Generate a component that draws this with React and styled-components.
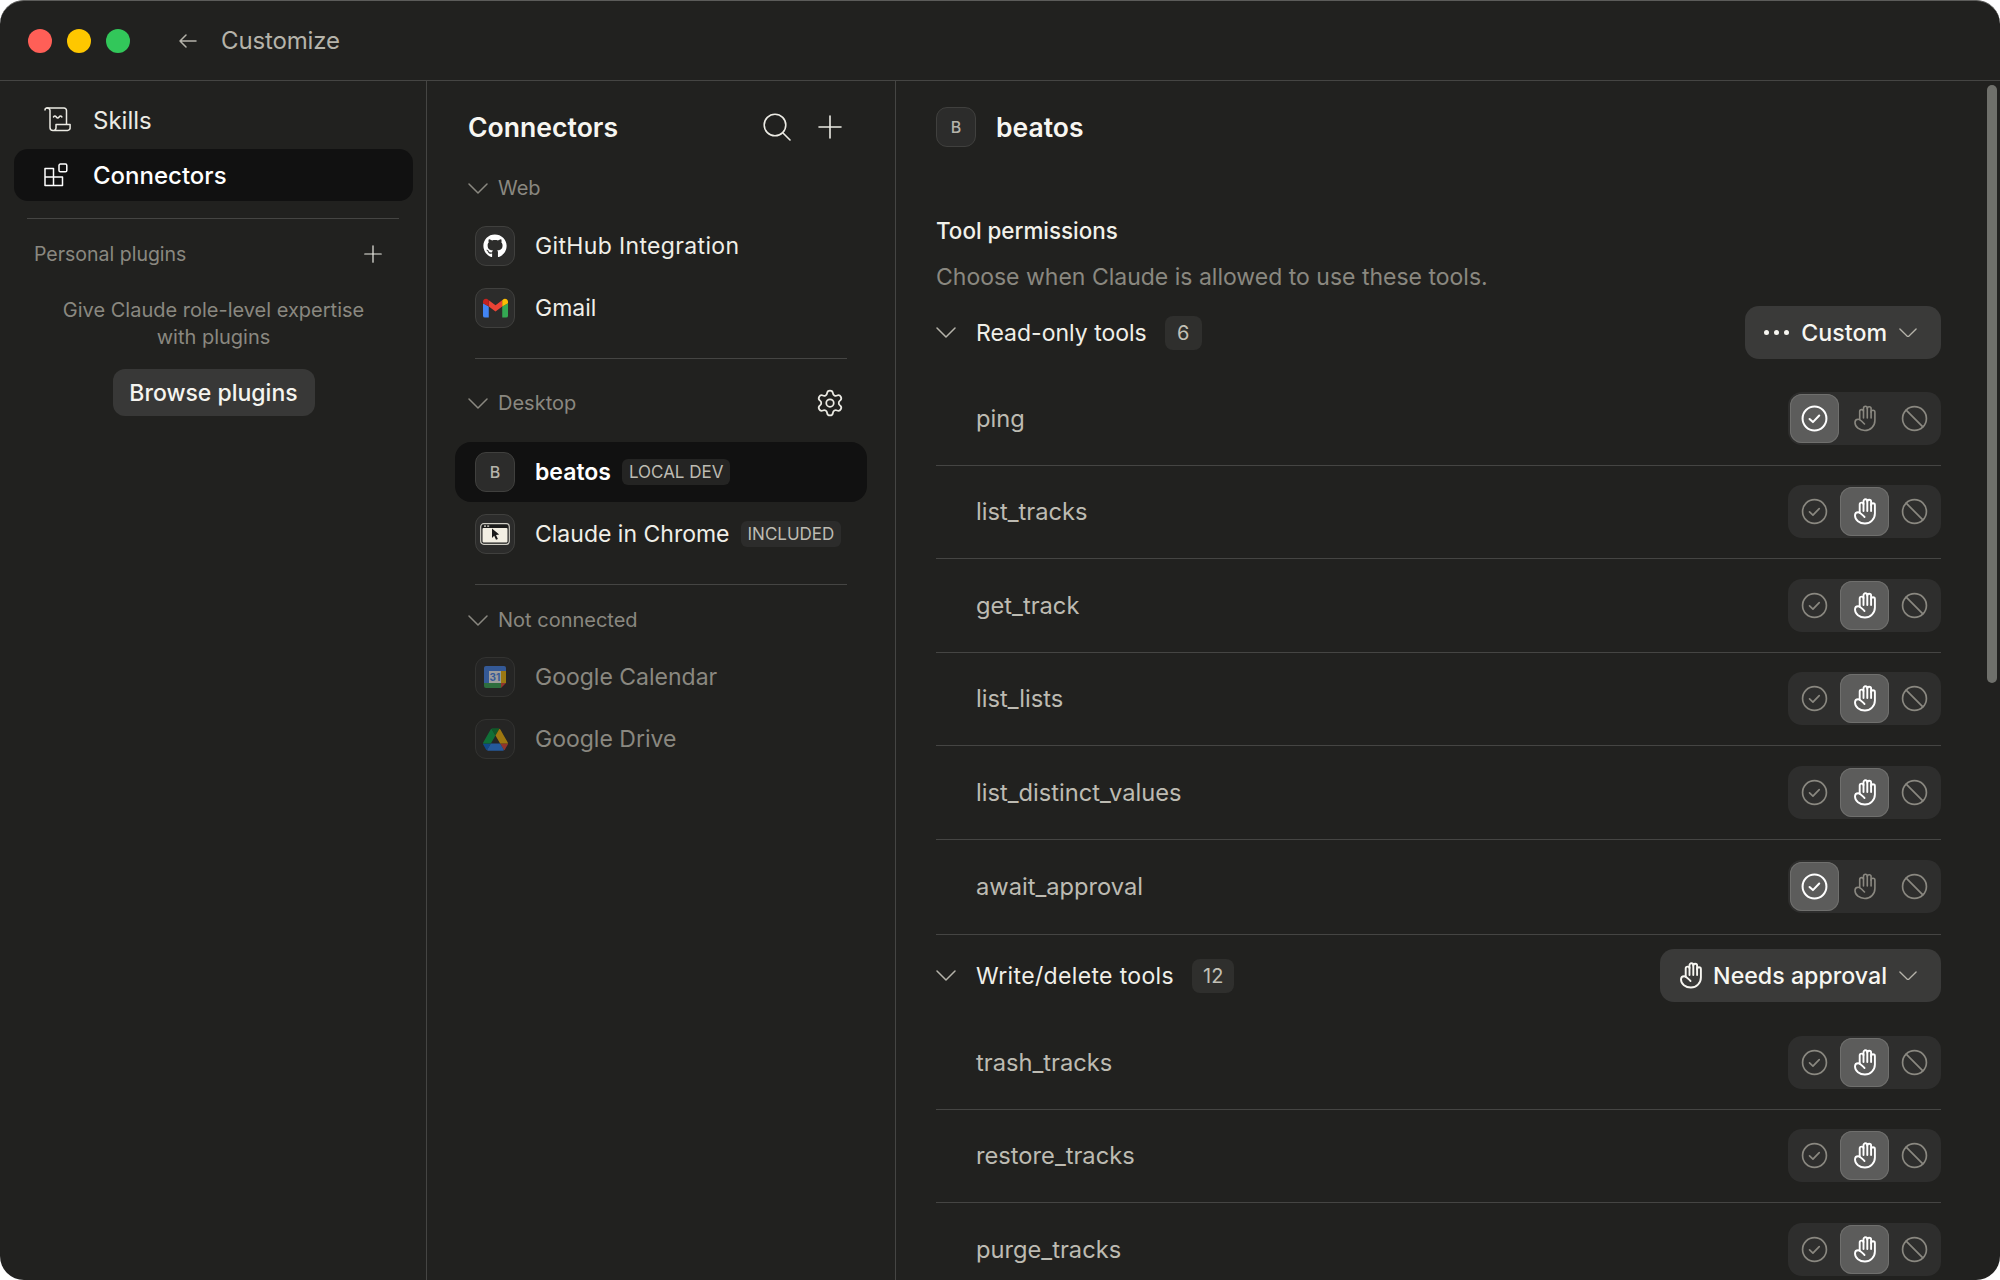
import React from 'react';
import styled, { createGlobalStyle } from 'styled-components';
import { FaGithub } from 'react-icons/fa';
import { Settings } from 'lucide-react';

const READ_ONLY = [
  { name: 'ping', mode: 'allow' },
  { name: 'list_tracks', mode: 'ask' },
  { name: 'get_track', mode: 'ask' },
  { name: 'list_lists', mode: 'ask' },
  { name: 'list_distinct_values', mode: 'ask' },
  { name: 'await_approval', mode: 'allow', tall: true }
];

const WRITE_TOOLS = [
  { name: 'trash_tracks', mode: 'ask' },
  { name: 'restore_tracks', mode: 'ask' },
  { name: 'purge_tracks', mode: 'ask' }
];

const Line = ({ size = 24, w = 1.6, box = '0 0 24 24', children }) => (
  <svg width={size} height={size} viewBox={box} fill="none" stroke="currentColor" strokeWidth={w} strokeLinecap="round" strokeLinejoin="round">
    {children}
  </svg>
);

const Chevron = ({ width = 20 }) => (
  <svg width={width} height={width * 0.55} viewBox="0 0 20 11" fill="none" stroke="currentColor" strokeWidth="1.5" strokeLinecap="round" strokeLinejoin="round">
    <path d="M1 1l9 9 9-9" />
  </svg>
);

const PlusIcon = ({ size = 24 }) => (
  <Line size={size} w={1.6} box="0 0 24 24"><path d="M12 1v22M1 12h22" /></Line>
);

const CheckIcon = ({ w }) => (
  <Line size={27} w={w}><circle cx="12" cy="12" r="10.6" /><path d="M7.6 12.4l3 2.8 5.6-5.8" /></Line>
);

const BanIcon = ({ w }) => (
  <Line size={27} w={w}><circle cx="12" cy="12" r="10.6" /><path d="M4.6 4.6l14.8 14.8" /></Line>
);

const HandIcon = ({ w = 1.9 }) => (
  <svg width="24" height="27" viewBox="0 0 23 27" fill="none" stroke="currentColor" strokeWidth={w} strokeLinecap="round" strokeLinejoin="round">
    <path d="M6.200 14.500V6.500a1.900 1.900 0 0 1 3.800 0V13" />
    <path d="M10 6V3.200a1.900 1.900 0 0 1 3.800 0V13" />
    <path d="M13.800 3.600a1.900 1.900 0 0 1 3.800 0V13" />
    <path d="M17.600 7.200a1.900 1.900 0 0 1 3.800 0v8.300a10 10 0 0 1-10 10c-5.400 0-9.900-3.500-9.900-8 0-2.200 1.500-3.300 3.100-3.300 2 0 3.400 1.800 6.400 4.800" />
  </svg>
);

const ScrollIcon = () => (
  <svg width="28" height="26" viewBox="0 0 28 26" fill="none" stroke="currentColor" strokeWidth="1.5" strokeLinecap="round" strokeLinejoin="round">
    <path d="M1 3a2 2 0 0 1 2-2h17a2.5 2.5 0 0 1 2.5 2.5V17" />
    <path d="M3 1a2.6 2.6 0 0 1 3 2.6v16.900a3 3 0 0 0 3 3h14.500a2.600 2.600 0 0 0 2.600-3v-3H12v3.200a2.800 2.800 0 0 1-3 2.800" />
    <path d="M9.500 10q1.400-2 2.800 0t2.800 0 2.800 0" />
  </svg>
);

const ConnectorsIcon = () => (
  <svg width="24" height="24" viewBox="0 0 24 24" fill="none" stroke="currentColor" strokeWidth="1.5" strokeLinejoin="round">
    <path d="M1 5.500h8.500v17H1zM1 14h17.500v8.500H9.500" />
    <rect x="15" y="1" width="7.800" height="7.800" rx="1.400" />
  </svg>
);

const SearchIcon = () => (
  <svg width="28" height="28" viewBox="0 0 28 28" fill="none" stroke="currentColor" strokeWidth="1.6" strokeLinecap="round">
    <circle cx="12" cy="12" r="10.800" />
    <path d="M20 20l7 7" />
  </svg>
);

const BackIcon = () => (
  <svg width="18" height="14" viewBox="0 0 18 14" fill="none" stroke="currentColor" strokeWidth="1.5" strokeLinecap="round" strokeLinejoin="round">
    <path d="M17 7H1M7 1L1 7l6 6" />
  </svg>
);

const GmailLogo = () => (
  <svg width="25" height="20" viewBox="0 0 26 20">
    <path d="M0 5v13a2 2 0 0 0 2 2h4V8.500z" fill="#4285f4" />
    <path d="M20 8.500V20h4a2 2 0 0 0 2-2V5z" fill="#34a853" />
    <path d="M6 8.500l7 5.200 7-5.200V2l-7 5.200L6 2z" fill="#ea4335" />
    <path d="M0 5V3.600C0 .8 3.400-.7 5.400 1.400L6 2v6.500z" fill="#c5221f" />
    <path d="M26 5V3.600c0-2.800-3.400-4.300-5.400-2.200L20 2v6.500z" fill="#fbbc04" />
  </svg>
);

const CalendarLogo = () => (
  <svg width="22" height="22" viewBox="0 0 22 22">
    <path d="M2 0h18a2 2 0 0 1 2 2v3H0V2a2 2 0 0 1 2-2z" fill="#4285f4" />
    <path d="M0 5h5v12H0z" fill="#4285f4" />
    <path d="M17 5h5v12h-5z" fill="#fbbc04" />
    <path d="M0 17h17v5H2a2 2 0 0 1-2-2z" fill="#34a853" />
    <path d="M17 17h5l-5 5z" fill="#ea4335" />
    <rect x="5" y="5" width="12" height="12" fill="#fff" />
    <text x="11" y="15" textAnchor="middle" fontSize="10" fontWeight="700" fontFamily="Inter, sans-serif" fill="#4285f4">31</text>
  </svg>
);

const DriveLogo = () => (
  <svg width="25" height="23" viewBox="0 0 87.300 78">
    <path d="m6.600 66.850 3.850 6.650c.8 1.400 1.950 2.500 3.300 3.300l13.750-23.800h-27.500c0 1.550.4 3.100 1.200 4.500z" fill="#0066da" />
    <path d="m43.650 25-13.750-23.800c-1.350.8-2.500 1.900-3.300 3.300l-25.400 44a9.060 9.060 0 0 0 -1.200 4.500h27.500z" fill="#00ac47" />
    <path d="m73.550 76.800c1.350-.8 2.500-1.900 3.300-3.300l1.600-2.750 7.650-13.250c.8-1.400 1.200-2.950 1.200-4.500h-27.502l5.852 11.500z" fill="#ea4335" />
    <path d="m43.650 25 13.750-23.800c-1.350-.8-2.900-1.200-4.500-1.200h-18.500c-1.600 0-3.150.45-4.500 1.200z" fill="#00832d" />
    <path d="m59.800 53h-32.300l-13.750 23.800c1.350.8 2.900 1.200 4.500 1.200h50.800c1.600 0 3.150-.45 4.500-1.200z" fill="#2684fc" />
    <path d="m73.400 26.500-12.700-22c-.8-1.400-1.950-2.500-3.300-3.300l-13.750 23.800 16.150 28h27.450c0-1.550-.4-3.100-1.200-4.500z" fill="#ffba00" />
  </svg>
);

const ChromeLogo = () => (
  <svg width="30" height="22" viewBox="0 0 30 22">
    <rect x=".7" y=".7" width="28.600" height="20.600" rx="3" fill="#1b1b1a" stroke="#cfcdc4" strokeWidth="1.200" />
    <rect x="2.500" y="5" width="25" height="14.500" rx="1" fill="#f3efe3" />
    <rect x="4" y="2.400" width="2" height="1.400" fill="#cfcdc4" />
    <rect x="7.200" y="2.400" width="2" height="1.400" fill="#cfcdc4" />
    <path d="M12 5.500l7.200 6-3.200.4 1.900 4-1.900.9-1.800-4-2.200 2.200z" fill="#1b1b1a" />
  </svg>
);

function Toggle({ mode }) {
  return (
    <ToggleGroup>
      <ToggleBtn $on={mode === 'allow'}><CheckIcon w={mode === 'allow' ? 1.8 : 1.5} /></ToggleBtn>
      <ToggleBtn $on={mode === 'ask'}><HandIcon w={mode === 'ask' ? 1.9 : 1.6} /></ToggleBtn>
      <ToggleBtn><BanIcon w={1.5} /></ToggleBtn>
    </ToggleGroup>
  );
}

function ToolRows({ tools }) {
  return tools.map(tool => (
    <ToolRow key={tool.name} $tall={tool.tall}>
      <ToolName>{tool.name}</ToolName>
      <Toggle mode={tool.mode} />
    </ToolRow>
  ));
}

export default function App() {
  return (
    <>
      <Global />
      <Window>
        <TitleBar>
          <Lights>
            <Light $c="#ff5f57" />
            <Light $c="#fec700" />
            <Light $c="#32c75a" />
          </Lights>
          <BackBtn><BackIcon /></BackBtn>
          <PageTitle>Customize</PageTitle>
        </TitleBar>

        <Body>
          <Sidebar>
            <NavItem>
              <NavIcon><ScrollIcon /></NavIcon>
              Skills
            </NavItem>
            <NavItem $active>
              <NavIcon><ConnectorsIcon /></NavIcon>
              Connectors
            </NavItem>
            <SideDivider />
            <PluginsHead>
              Personal plugins
              <PlusWrap><PlusIcon size={18} /></PlusWrap>
            </PluginsHead>
            <PluginsHint>Give Claude role-level expertise with plugins</PluginsHint>
            <BrowseBtn>Browse plugins</BrowseBtn>
          </Sidebar>

          <Middle>
            <MidHeader>
              <MidTitle>Connectors</MidTitle>
              <HeadActions>
                <IconBtn><SearchIcon /></IconBtn>
                <IconBtn><PlusIcon size={24} /></IconBtn>
              </HeadActions>
            </MidHeader>

            <GroupLabel $top={28}>
              <LabelChevron><Chevron /></LabelChevron>
              Web
            </GroupLabel>
            <RowList $gap={13}>
              <ConnRow>
                <Tile><FaGithub size={24} color="#fff" /></Tile>
                <ConnName $wide>GitHub Integration</ConnName>
              </ConnRow>
              <ConnRow>
                <Tile><GmailLogo /></Tile>
                <ConnName>Gmail</ConnName>
              </ConnRow>
            </RowList>

            <MidDivider $after={29} />

            <GroupLabel>
              <LabelChevron><Chevron /></LabelChevron>
              Desktop
              <GearWrap><Settings size={30} strokeWidth={1.4} /></GearWrap>
            </GroupLabel>
            <RowList $gap={24}>
              <ConnRow $active>
                <Tile $active>B</Tile>
                <ConnName $active>beatos</ConnName>
                <Badge $active>LOCAL DEV</Badge>
              </ConnRow>
              <ConnRow>
                <Tile><ChromeLogo /></Tile>
                <ConnName>Claude in Chrome</ConnName>
                <Badge>INCLUDED</Badge>
              </ConnRow>
            </RowList>

            <MidDivider $after={20} />

            <GroupLabel>
              <LabelChevron><Chevron /></LabelChevron>
              Not connected
            </GroupLabel>
            <RowList $gap={12}>
              <ConnRow>
                <Tile $dim><CalendarLogo /></Tile>
                <ConnName $dim>Google Calendar</ConnName>
              </ConnRow>
              <ConnRow>
                <Tile $dim><DriveLogo /></Tile>
                <ConnName $dim>Google Drive</ConnName>
              </ConnRow>
            </RowList>
          </Middle>

          <Detail>
            <DetailHead>
              <Tile $active>B</Tile>
              <DetailTitle>beatos</DetailTitle>
            </DetailHead>

            <PermTitle>Tool permissions</PermTitle>
            <PermHint>Choose when Claude is allowed to use these tools.</PermHint>

            <ToolHead>
              <HeadLeft>
                <Chevron />
                <ToolGroupName>Read-only tools</ToolGroupName>
                <CountPill>6</CountPill>
              </HeadLeft>
              <Dropdown>
                <Dots><i /><i /><i /></Dots>
                Custom
                <DropChevron><Chevron width={18} /></DropChevron>
              </Dropdown>
            </ToolHead>
            <ToolRows tools={READ_ONLY} />

            <ToolHead $next>
              <HeadLeft>
                <Chevron />
                <ToolGroupName $wide>Write/delete tools</ToolGroupName>
                <CountPill>12</CountPill>
              </HeadLeft>
              <Dropdown>
                <DropHand><HandIcon w={1.9} /></DropHand>
                Needs approval
                <DropChevron><Chevron width={18} /></DropChevron>
              </Dropdown>
            </ToolHead>
            <ToolRows tools={WRITE_TOOLS} />

            <Scrollbar />
          </Detail>
        </Body>
      </Window>
    </>
  );
}

const Global = createGlobalStyle`
  html, body { margin: 0; padding: 0; background: #fff; }
  body { font-family: Inter, "Noto Sans", sans-serif; overflow: hidden; }
  * { box-sizing: border-box; }
`;

const Window = styled.div`
  width: 2000px;
  height: 1280px;
  background: #21211f;
  border-radius: 24px;
  border-top: 1px solid #5c5c5a;
  overflow: hidden;
  display: flex;
  flex-direction: column;
`;

const TitleBar = styled.div`
  height: 80px;
  flex: none;
  display: flex;
  align-items: center;
  padding-left: 28px;
  border-bottom: 1px solid #454543;
`;

const Lights = styled.div`
  display: flex;
  gap: 15px;
`;

const Light = styled.span`
  width: 24px;
  height: 24px;
  border-radius: 50%;
  background: ${p => p.$c};
`;

const BackBtn = styled.span`
  display: flex;
  margin-left: 49px;
  color: #b5b3aa;
`;

const PageTitle = styled.span`
  margin-left: 24px;
  font-size: 24px;
  color: #b5b3aa;
  letter-spacing: -0.15px;
`;

const Body = styled.div`
  flex: 1;
  display: flex;
  min-height: 0;
`;

const Sidebar = styled.aside`
  width: 427px;
  flex: none;
  padding: 13px 13px 0 14px;
  border-right: 1px solid #454543;
  display: flex;
  flex-direction: column;
`;

const NavItem = styled.div`
  height: 52px;
  display: flex;
  align-items: center;
  margin-bottom: 3px;
  padding-left: 30px;
  border-radius: 14px;
  font-size: 24px;
  font-weight: ${p => (p.$active ? 500 : 400)};
  color: ${p => (p.$active ? '#fff' : '#ecebe4')};
  background: ${p => (p.$active ? '#111111' : 'transparent')};
`;

const NavIcon = styled.span`
  width: 49px;
  display: flex;
`;

const SideDivider = styled.div`
  height: 1px;
  background: #454543;
  margin: 14px 14px 20px 13px;
`;

const PluginsHead = styled.div`
  height: 30px;
  display: flex;
  align-items: center;
  justify-content: space-between;
  padding: 0 31px 0 20px;
  font-size: 19.5px;
  color: #8a8880;
`;

const PlusWrap = styled.span`
  display: flex;
  color: #ecebe4;
`;

const PluginsHint = styled.p`
  margin: 28px 45px 0;
  text-align: center;
  font-size: 20px;
  line-height: 27px;
  color: #8a8880;
`;

const BrowseBtn = styled.button`
  align-self: center;
  margin-top: 18px;
  height: 47px;
  width: 202px;
  border: none;
  border-radius: 12px;
  background: #383837;
  color: #f5f4ef;
  font-family: inherit;
  font-size: 23px;
  font-weight: 500;
`;

const Middle = styled.section`
  width: 469px;
  flex: none;
  padding: 28px 28px 0;
  border-right: 1px solid #454543;
  display: flex;
  flex-direction: column;
`;

const MidHeader = styled.div`
  height: 36px;
  display: flex;
  align-items: center;
  justify-content: space-between;
  padding: 0 22px 0 13px;
`;

const MidTitle = styled.h2`
  margin: 0;
  font-size: 26.6px;
  font-weight: 600;
  color: #f7f6f1;
`;

const HeadActions = styled.div`
  display: flex;
  gap: 23px;
`;

const IconBtn = styled.span`
  width: 30px;
  height: 30px;
  display: flex;
  align-items: center;
  justify-content: center;
  color: #ecebe4;
`;

const GroupLabel = styled.div`
  height: 30px;
  margin-top: ${p => p.$top || 0}px;
  padding: 0 22px 0 13px;
  display: flex;
  align-items: center;
  font-size: 20px;
  color: #8a8880;
`;

const LabelChevron = styled.span`
  display: flex;
  width: 30px;
  color: #8a8880;
`;

const GearWrap = styled.span`
  margin-left: auto;
  display: flex;
  color: #ecebe4;
`;

const RowList = styled.div`
  margin-top: ${p => p.$gap}px;
  margin-bottom: 20px;
  display: flex;
  flex-direction: column;
  gap: 2px;
`;

const ConnRow = styled.div`
  height: 60px;
  display: flex;
  align-items: center;
  padding-left: 20px;
  border-radius: 16px;
  background: ${p => (p.$active ? '#111111' : 'transparent')};
`;

const Tile = styled.span`
  width: 40px;
  height: 40px;
  flex: none;
  display: flex;
  align-items: center;
  justify-content: center;
  border-radius: 11px;
  background: ${p => (p.$dim ? '#252524' : '#2c2c2b')};
  border: 1px solid ${p => (p.$dim ? '#333331' : '#40403e')};
  color: #b5b3aa;
  font-size: 16px;
  font-weight: 500;

  svg { opacity: ${p => (p.$dim ? 0.55 : 1)}; }
`;

const ConnName = styled.span`
  margin-left: 20px;
  font-size: 23px;
  letter-spacing: ${p => (p.$wide ? '0.35px' : '0')};
  font-weight: ${p => (p.$active ? 600 : 400)};
  color: ${p => (p.$dim ? '#8a8880' : p.$active ? '#fff' : '#f0efe8')};
  white-space: nowrap;
`;

const Badge = styled.span`
  height: 26px;
  display: flex;
  align-items: center;
  margin-left: 11px;
  padding: 0 7px;
  border-radius: 6px;
  background: ${p => (p.$active ? '#242423' : '#2c2c2b')};
  color: #bdbbb2;
  font-size: 17px;
  white-space: nowrap;
`;

const MidDivider = styled.div`
  height: 1px;
  background: #454543;
  margin: 0 20px ${p => p.$after}px;
`;

const Detail = styled.main`
  flex: 1;
  min-width: 0;
  position: relative;
  padding: 26px 59px 0 40px;
  overflow: hidden;
`;

const DetailHead = styled.div`
  display: flex;
  align-items: center;
  gap: 20px;
  height: 40px;
`;

const DetailTitle = styled.h2`
  margin: 0;
  font-size: 26.5px;
  font-weight: 600;
  color: #f7f6f1;
`;

const PermTitle = styled.h3`
  margin: 69px 0 0;
  height: 30px;
  line-height: 30px;
  font-size: 22.4px;
  font-weight: 500;
  color: #f2f1ea;
`;

const PermHint = styled.p`
  margin: 15px 0 0;
  height: 32px;
  line-height: 32px;
  font-size: 23px;
  color: #8a8880;
`;

const ToolHead = styled.div`
  height: 53px;
  margin-top: ${p => (p.$next ? 14 : 13)}px;
  margin-bottom: ${p => (p.$next ? 14 : 13)}px;
  display: flex;
  align-items: center;
  justify-content: space-between;
`;

const HeadLeft = styled.div`
  display: flex;
  align-items: center;
  color: #b5b3aa;
`;

const ToolGroupName = styled.span`
  margin-left: 20px;
  font-size: 23px;
  letter-spacing: ${p => (p.$wide ? '0.35px' : '0')};
  color: #f0efe8;
`;

const CountPill = styled.span`
  margin-left: 18px;
  min-width: 37px;
  height: 34px;
  padding: 0 11px;
  display: flex;
  align-items: center;
  justify-content: center;
  border-radius: 8px;
  background: #2f2f2d;
  color: #c2c0b6;
  font-size: 20px;
`;

const Dropdown = styled.div`
  height: 53px;
  display: flex;
  align-items: center;
  gap: 12px;
  padding: 0 24px 0 19px;
  border-radius: 14px;
  background: #3a3a39;
  color: #f7f6f1;
  font-size: 23.2px;
  font-weight: 500;
`;

const DropHand = styled.span`
  display: flex;
  margin-right: -2px;
`;

const Dots = styled.span`
  display: flex;
  gap: 5px;

  i {
    width: 5px;
    height: 5px;
    border-radius: 50%;
    background: #f7f6f1;
  }
`;

const DropChevron = styled.span`
  display: flex;
  color: #b5b3aa;
`;

const ToolRow = styled.div`
  height: ${p => (p.$tall ? 95.5 : 93.5)}px;
  display: flex;
  align-items: center;
  justify-content: space-between;
  padding-left: 40px;
  border-bottom: 1px solid #454543;
`;

const ToolName = styled.span`
  font-size: 23.7px;
  color: #bdbbb2;
`;

const ToggleGroup = styled.div`
  display: flex;
  gap: 1px;
  padding: 2px;
  border-radius: 14px;
  background: #2e2e2d;
`;

const ToggleBtn = styled.span`
  width: 49px;
  height: 49px;
  display: flex;
  align-items: center;
  justify-content: center;
  border-radius: 12px;
  color: ${p => (p.$on ? '#fff' : '#8a8880')};
  background: ${p => (p.$on ? '#5c5c5b' : 'transparent')};
  box-shadow: ${p => (p.$on ? 'inset 0 0 0 1px #6f6f6d' : 'none')};
`;

const Scrollbar = styled.div`
  position: absolute;
  top: 4px;
  right: 3px;
  width: 10px;
  height: 598px;
  border-radius: 5px;
  background: #6f706b;
`;
